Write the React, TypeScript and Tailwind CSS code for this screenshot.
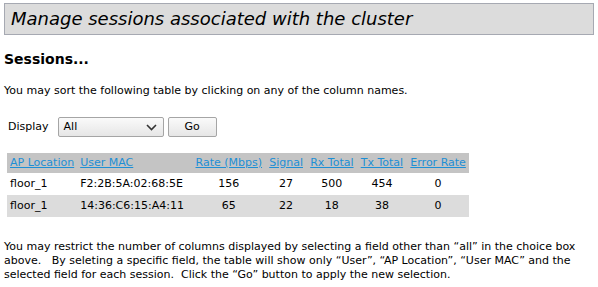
const rows = [
  { ap: "floor_1", mac: "F2:2B:5A:02:68:5E", rate: 156, signal: 27, rx: 500, tx: 454, err: 0 },
  { ap: "floor_1", mac: "14:36:C6:15:A4:11", rate: 65, signal: 22, rx: 18, tx: 38, err: 0 },
];

const headers = ["AP Location", "User MAC", "Rate (Mbps)", "Signal", "Rx Total", "Tx Total", "Error Rate"];

export default function App() {
  return (
    <div className="min-h-[287px] w-[598px] bg-white px-1 pt-[3px] font-['DejaVu_Sans',sans-serif] text-[11px] text-black">
      <div className="flex h-[32px] items-center border border-[#a6a9b2] bg-[#dcdcdc] pl-[6px]">
        <h1 className="text-[18px] italic leading-none">Manage sessions associated with the cluster</h1>
      </div>

      <h2 className="mt-[17px] text-[14px] font-bold leading-none">Sessions...</h2>

      <p className="mt-[19px] leading-none">You may sort the following table by clicking on any of the column names.</p>

      <div className="mt-[21px] flex items-center pl-1">
        <span className="mr-[9px]">Display</span>
        <div className="flex h-[20px] w-[106px] items-center justify-between rounded-[2px] border border-[#a5a5a5] bg-gradient-to-b from-[#fafafa] to-[#e6e6e6] pl-[5px] pr-[6px]">
          <span>All</span>
          <svg width="11" height="7" viewBox="0 0 11 7" fill="none" stroke="#333" strokeWidth="1.6">
            <path d="M1 1l4.5 4.5L10 1" />
          </svg>
        </div>
        <button className="ml-[4px] flex h-[20px] w-[49px] items-center justify-center rounded-[2px] border border-[#a5a5a5] bg-gradient-to-b from-[#fafafa] to-[#e6e6e6]">
          Go
        </button>
      </div>

      <table className="mt-[16px] ml-[3px] border-collapse">
        <thead>
          <tr className="h-[20px] bg-[#c4c4c4]">
            {headers.map((h, i) => (
              <th
                key={h}
                className={`font-normal whitespace-nowrap text-[#1d8fd6] underline ${i < 2 ? "px-[3px] text-left" : "px-[3.6px] text-center"}`}
              >
                {h}
              </th>
            ))}
          </tr>
        </thead>
        <tbody>
          {rows.map((r, i) => (
            <tr key={r.mac} className={`h-[22px] ${i % 2 ? "bg-[#dcdcdc]" : "bg-white"}`}>
              <td className="px-[3px]">{r.ap}</td>
              <td className="px-[3px] pr-[8px]">{r.mac}</td>
              <td className="px-[3.6px] text-center">{r.rate}</td>
              <td className="px-[3.6px] text-center">{r.signal}</td>
              <td className="px-[3.6px] text-center">{r.rx}</td>
              <td className="px-[3.6px] text-center">{r.tx}</td>
              <td className="px-[3.6px] text-center">{r.err}</td>
            </tr>
          ))}
        </tbody>
      </table>

      <p className="mt-[23px] w-[585px] leading-[14px]">
        You may restrict the number of columns displayed by selecting a field other than “all” in the choice box
        above.&nbsp;&nbsp; By seleting a specific field, the table will show only “User”, “AP Location”, “User MAC” and the
        selected field for each session.&nbsp; Click the “Go” button to apply the new selection.
      </p>
    </div>
  );
}
